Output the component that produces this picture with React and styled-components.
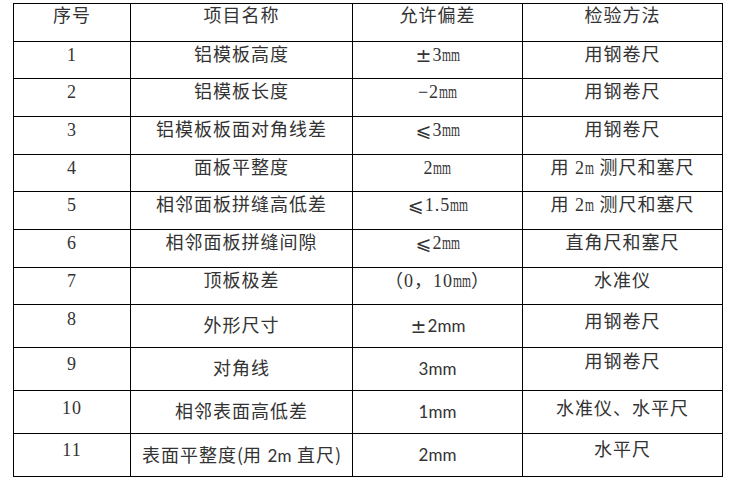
import React from 'react';
import styled, { createGlobalStyle } from 'styled-components';

const Global = createGlobalStyle`
  html, body { margin: 0; padding: 0; background: #fff; }
  body { width: 739px; height: 484px; overflow: hidden; }
`;

const SERIF = `"Liberation Serif", "Noto Sans CJK SC", serif`;
const SANS = `"Lato", "Noto Sans CJK SC", sans-serif`;

const Page = styled.div`
  padding: 3px 0 0 13px;
`;

const Table = styled.div`
  display: grid;
  grid-template-columns: 117px 222px 170px 200px;
  grid-template-rows: 38px 37px 38px 38px 37px 38px 38px 37px 43px 43px 43px 43px;
  width: max-content;
  border-left: 1px solid #000;
  border-top: 1px solid #000;
`;

const Cell = styled.div`
  box-sizing: border-box;
  border-right: 1px solid #000;
  border-bottom: 1px solid #000;
  padding-top: ${(p) => p.$top}px;
  text-align: center;
  font-family: ${(p) => (p.$sans ? SANS : SERIF)};
  font-size: ${(p) => (p.$sans ? 17 : 18)}px;
  font-weight: 400;
  letter-spacing: ${(p) => (p.$sans ? 0 : 1)}px;
  line-height: 20px;
  color: #333;
  white-space: nowrap;
`;

const Sym = styled.span`
  display: inline-block;
  width: 18px;
  text-align: center;
  letter-spacing: 0;
  font-family: "DejaVu Sans", "Noto Sans CJK SC", sans-serif;
  font-weight: 400;
  font-size: 19px;
  line-height: 20px;
  vertical-align: top;
`;

const Cjk = styled.span`
  font-family: "Noto Sans CJK SC", sans-serif;
  letter-spacing: 0;
`;

const Latin = styled.span`
  font-family: "Lato", "Liberation Sans", sans-serif;
  font-size: 17px;
  letter-spacing: 0;
`;

const Unit = styled.span`
  display: inline-block;
  letter-spacing: 0;
  transform: scaleX(0.64);
  transform-origin: 0 50%;
  margin-right: ${(p) => -5 * (p.$n || 2)}px;
`;

const header = ['序号', '项目名称', '允许偏差', '检验方法'];

const rows = [
  { no: '1', name: '铝模板高度', tol: <><Sym>±</Sym>3<Unit>mm</Unit></>, method: '用钢卷尺', tops: [3, 3, 3, 3] },
  { no: '2', name: '铝模板长度', tol: <>−2<Unit>mm</Unit></>, method: '用钢卷尺', tops: [3, 3, 3, 3] },
  { no: '3', name: '铝模板板面对角线差', tol: <><Sym>⩽</Sym>3<Unit>mm</Unit></>, method: '用钢卷尺', tops: [3, 3, 3, 3] },
  { no: '4', name: '面板平整度', tol: <>2<Unit>mm</Unit></>, method: <>用 2<Unit $n={1}>m</Unit> 测尺和塞尺</>, tops: [3, 3, 3, 3] },
  { no: '5', name: '相邻面板拼缝高低差', tol: <><Sym>⩽</Sym>1.5<Unit>mm</Unit></>, method: <>用 2<Unit $n={1}>m</Unit> 测尺和塞尺</>, tops: [3, 3, 3, 3] },
  { no: '6', name: '相邻面板拼缝间隙', tol: <><Sym>⩽</Sym>2<Unit>mm</Unit></>, method: '直角尺和塞尺', tops: [3, 3, 3, 3] },
  { no: '7', name: '顶板极差', tol: <>（0，10<Unit>mm</Unit>）</>, method: '水准仪', tops: [3, 3, 3, 3] },
  { no: '8', name: '外形尺寸', tol: <><Sym>±</Sym>2mm</>, sans: true, method: '用钢卷尺', tops: [4, 11, 11, 7] },
  { no: '9', name: '对角线', tol: '3mm', sans: true, method: '用钢卷尺', tops: [6, 11, 11, 4] },
  { no: '10', name: '相邻表面高低差', tol: '1mm', sans: true, method: '水准仪、水平尺', tops: [7, 11, 11, 8] },
  {
    no: '11',
    name: <>表面平整度<Cjk>(</Cjk>用 <Latin>2m</Latin> 直尺<Cjk>)</Cjk></>,
    tol: '2mm',
    sans: true,
    method: '水平尺',
    tops: [6, 10, 11, 6],
  },
];

export default function App() {
  return (
    <Page>
      <Global />
      <Table>
        {header.map((h) => (
          <Cell key={h} $top={2}>{h}</Cell>
        ))}
        {rows.map((r) => (
          <React.Fragment key={r.no}>
            <Cell $top={r.tops[0]}>{r.no}</Cell>
            <Cell $top={r.tops[1]}>{r.name}</Cell>
            <Cell $top={r.tops[2]} $sans={r.sans}>{r.tol}</Cell>
            <Cell $top={r.tops[3]}>{r.method}</Cell>
          </React.Fragment>
        ))}
      </Table>
    </Page>
  );
}
